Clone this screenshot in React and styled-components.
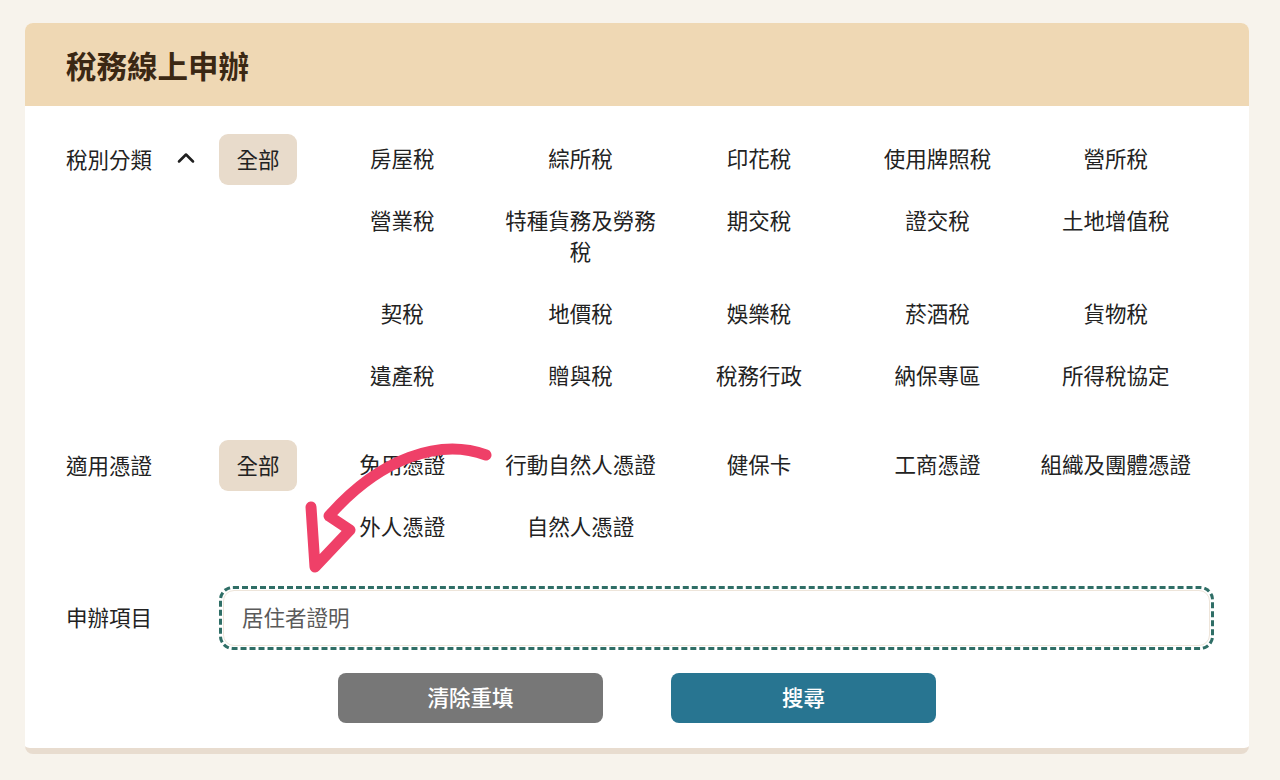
import React, { useState } from 'react'
import styled, { createGlobalStyle } from 'styled-components'
import { ChevronUp } from 'lucide-react'

const GlobalStyle = createGlobalStyle`
    body {
        margin: 0;
        background: #f7f3ec;
        font-family: "Noto Sans CJK TC", "Noto Sans", sans-serif;
        color: #222;
    }
`;

const Page = styled.div`
    padding: 23px 31px 26px 25px;
`;

const Card = styled.div`
    position: relative;
    background: #fff;
    border-radius: 8px;
    border-bottom: 6px solid #e8dccf;
`;

const Header = styled.div`
    height: 83px;
    box-sizing: border-box;
    padding: 0 41px;
    display: flex;
    align-items: center;
    background: #efd8b4;
    border-radius: 8px 8px 0 0;
`;

const Title = styled.h1`
    margin: 0;
    font-size: 30.5px;
    font-weight: 700;
    color: #3b2814;
`;

const Body = styled.div`
    padding: 28px 35px 25px 41px;
    display: flex;
    flex-direction: column;
`;

const Section = styled.div`
    display: flex;
    align-items: flex-start;
    margin-bottom: ${(p) => p.gap || 0}px;
`;

const Label = styled.div`
    width: 153px;
    flex-shrink: 0;
    height: ${(p) => p.h || 51}px;
    box-sizing: border-box;
    padding-bottom: 3px;
    display: flex;
    align-items: center;
    font-size: 21.5px;
    line-height: 31px;
    color: #222;
`;

const Toggle = styled.button`
    margin-left: 20px;
    padding: 0;
    border: none;
    background: none;
    display: flex;
    align-items: center;
    color: #1f1f1f;
    cursor: pointer;
`;

const AllButton = styled.button`
    width: 78px;
    height: 51px;
    flex-shrink: 0;
    padding: 0 0 3px;
    border: none;
    border-radius: 9px;
    background: #e8dbcb;
    font-family: inherit;
    font-size: 21.5px;
    color: #222;
    cursor: pointer;
`;

const Grid = styled.div`
    width: 892px;
    margin-left: 16px;
    display: grid;
    grid-template-columns: repeat(5, 1fr);
    row-gap: 11px;
`;

const Item = styled.div`
    padding: 8px 10px 12px;
    text-align: center;
    font-size: 21.5px;
    line-height: 31px;
    color: #222;
    cursor: pointer;
`;

const InputRing = styled.div`
    flex: 1;
    border: 3px dashed #2f6e66;
    border-radius: 14px;
    padding: 1px;
`;

const Input = styled.input`
    width: 100%;
    height: 56px;
    box-sizing: border-box;
    border: 1px solid #eee5da;
    border-radius: 11px;
    padding: 0 18px 3px;
    font-family: inherit;
    font-size: 21.5px;
    color: #222;
    outline: none;
    &::placeholder {
        color: #5a5a5a;
    }
`;

const Actions = styled.div`
    margin-top: 23px;
    display: flex;
    justify-content: center;
    gap: 68px;
    margin-right: 6px;
`;

const ActionButton = styled.button`
    width: 265px;
    height: 50px;
    padding: 0 0 3px;
    border: none;
    border-radius: 8px;
    background: ${(p) => (p.primary ? '#287591' : '#777777')};
    color: #fff;
    font-family: inherit;
    font-size: 21.5px;
    font-weight: 500;
    cursor: pointer;
`;

const Arrow = styled.svg`
    position: absolute;
    left: 0;
    top: 0;
    pointer-events: none;
`;

const taxTypes = [
    '房屋稅', '綜所稅', '印花稅', '使用牌照稅', '營所稅',
    '營業稅', '特種貨務及勞務稅', '期交稅', '證交稅', '土地增值稅',
    '契稅', '地價稅', '娛樂稅', '菸酒稅', '貨物稅',
    '遺產稅', '贈與稅', '稅務行政', '納保專區', '所得稅協定',
]

const certs = ['免用憑證', '行動自然人憑證', '健保卡', '工商憑證', '組織及團體憑證', '外人憑證', '自然人憑證']

export default function App() {
    const [open, setOpen] = useState(true)
    const [query, setQuery] = useState('')
    return (
        <Page>
            <GlobalStyle />
            <Card>
                <Header>
                    <Title>稅務線上申辦</Title>
                </Header>
                <Body>
                    <Section gap={38}>
                        <Label>
                            稅別分類
                            <Toggle onClick={() => setOpen(!open)}>
                                <ChevronUp size={28} strokeWidth={2.2} />
                            </Toggle>
                        </Label>
                        <AllButton>全部</AllButton>
                        <Grid>
                            {open && taxTypes.map((t) => <Item key={t}>{t}</Item>)}
                        </Grid>
                    </Section>
                    <Section gap={33}>
                        <Label>適用憑證</Label>
                        <AllButton>全部</AllButton>
                        <Grid>
                            {certs.map((c) => <Item key={c}>{c}</Item>)}
                        </Grid>
                    </Section>
                    <Section>
                        <Label h={64}>申辦項目</Label>
                        <InputRing>
                            <Input
                                placeholder="居住者證明"
                                value={query}
                                onChange={(e) => setQuery(e.target.value)}
                            />
                        </InputRing>
                    </Section>
                    <Actions>
                        <ActionButton onClick={() => setQuery('')}>清除重填</ActionButton>
                        <ActionButton primary>搜尋</ActionButton>
                    </Actions>
                </Body>
                <Arrow width="520" height="580" viewBox="0 0 520 580">
                    <path
                        d="M461,432 C415,415 355,435 304,493 L325,507 L290,544 L286,484"
                        fill="none"
                        stroke="#ef4068"
                        strokeWidth="11"
                        strokeLinecap="round"
                        strokeLinejoin="round"
                    />
                </Arrow>
            </Card>
        </Page>
    )
}
